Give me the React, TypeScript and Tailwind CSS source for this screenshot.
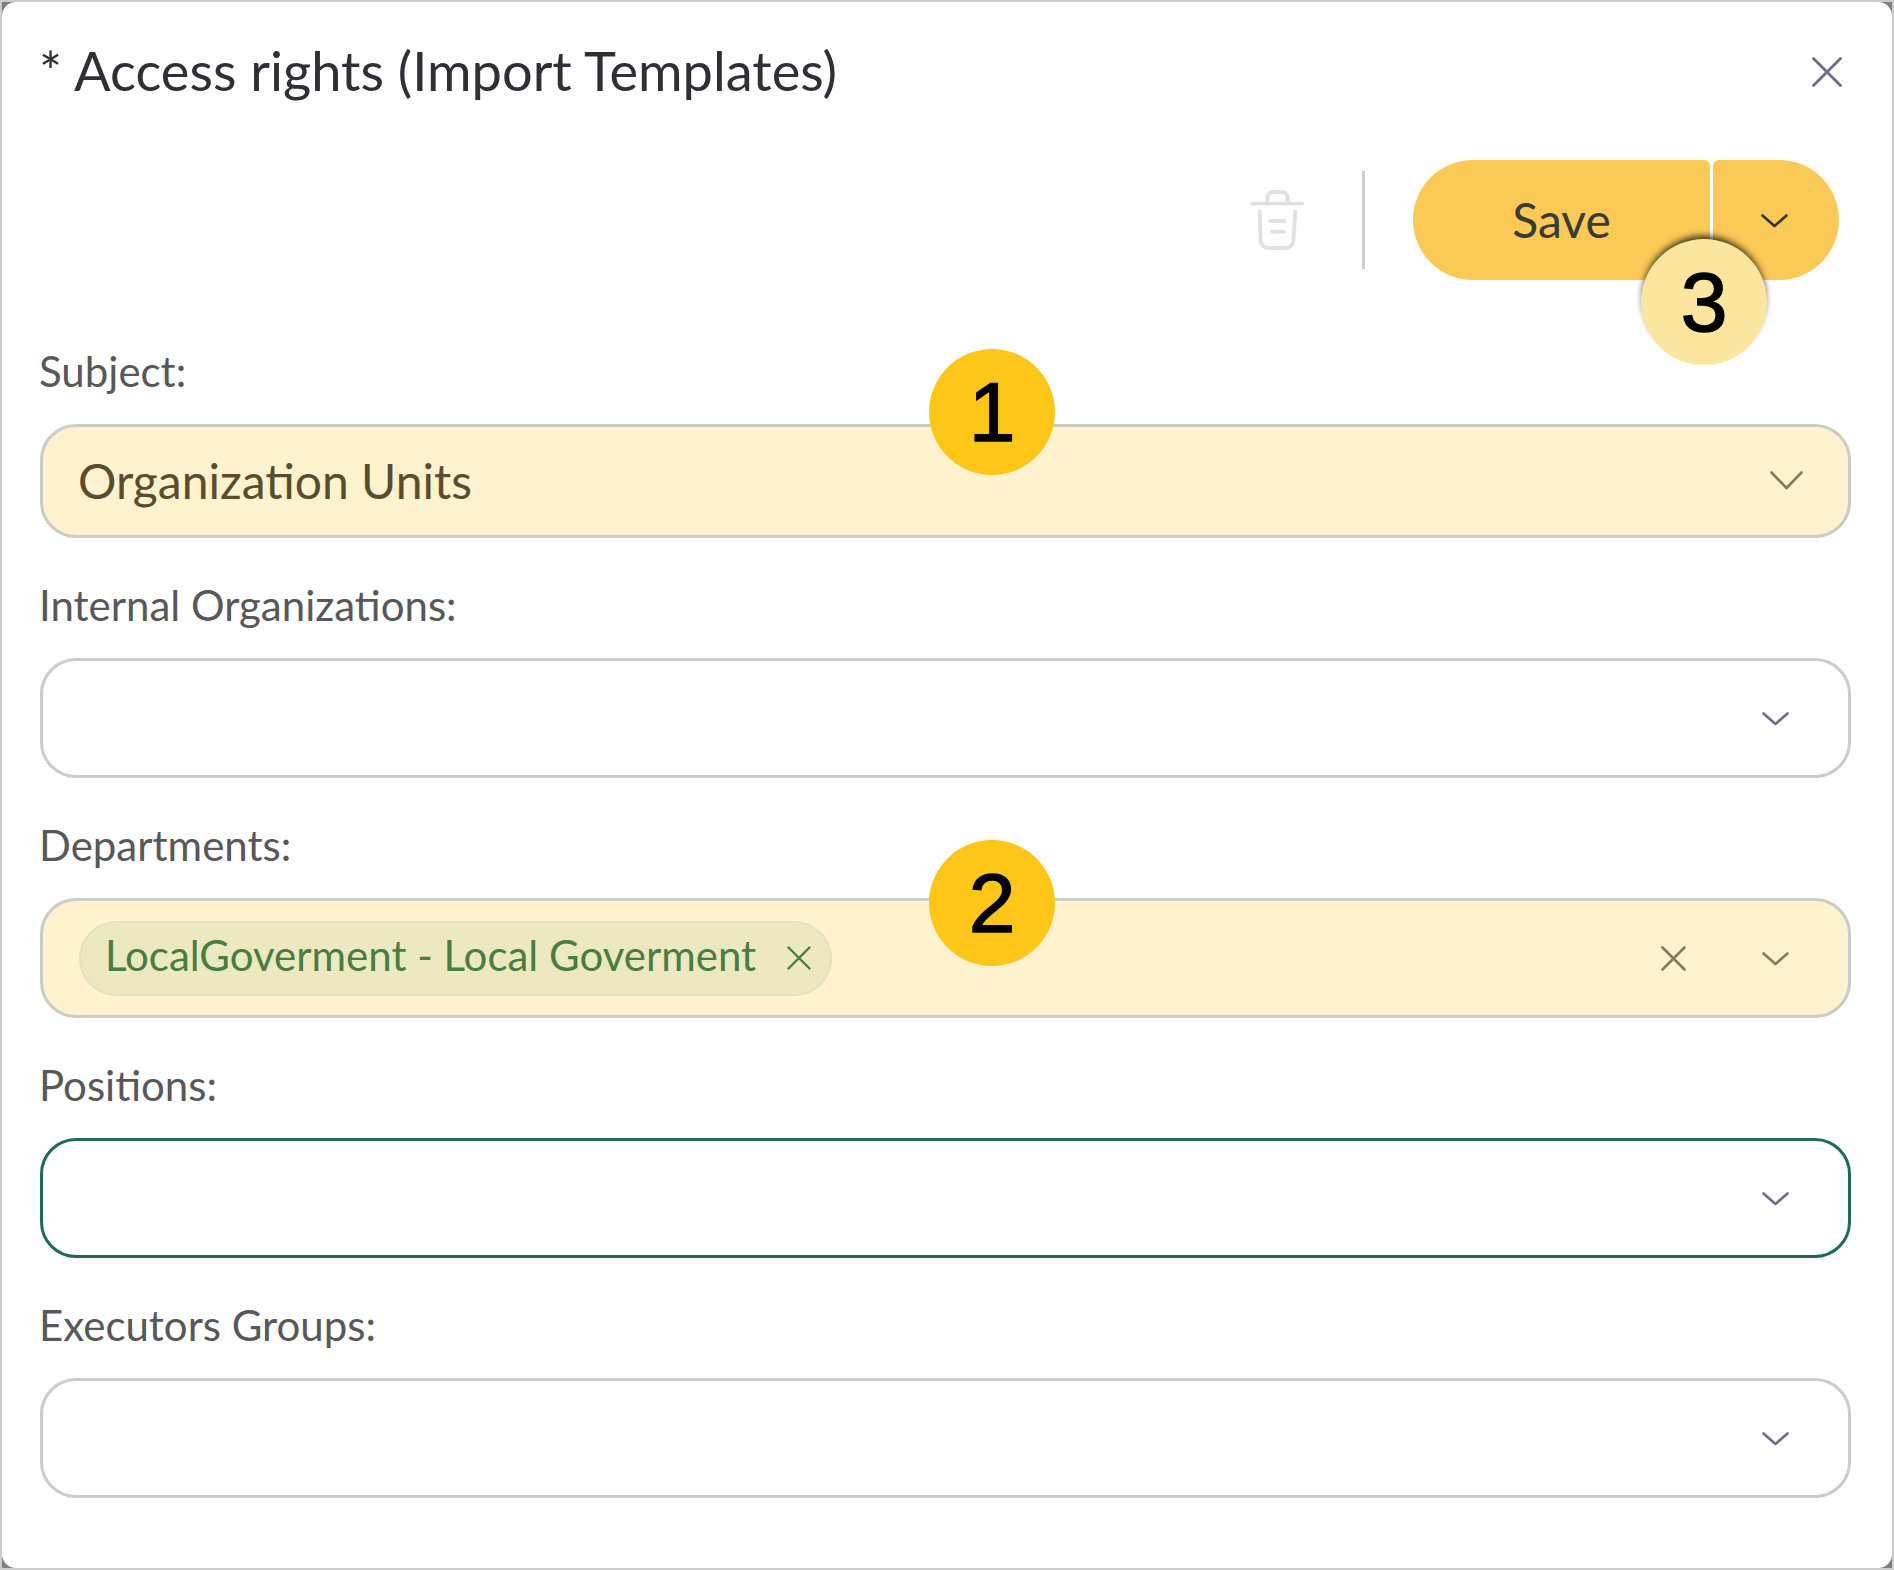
import React from "react";

function Chevron({ color, wide = false, className = "" }: { color: string; wide?: boolean; className?: string }) {
  return (
    <svg width={wide ? 33 : 27} height={wide ? 19 : 14} viewBox={wide ? "0 0 33 19" : "0 0 27 14"} fill="none" className={`shrink-0 ${className}`}>
      <path d={wide ? "M1.5 1.5 L16.5 17 L31.5 1.5" : "M1.5 1.5 L13.5 12 L25.5 1.5"} stroke={color} strokeWidth="2.6" strokeLinecap="round" strokeLinejoin="round" />
    </svg>
  );
}

function Cross({ size, color, width = 2.4 }: { size: number; color: string; width?: number }) {
  return (
    <svg width={size} height={size} viewBox={`0 0 ${size} ${size}`} fill="none" className="shrink-0">
      <path d={`M1.5 1.5 L${size - 1.5} ${size - 1.5} M${size - 1.5} 1.5 L1.5 ${size - 1.5}`} stroke={color} strokeWidth={width} strokeLinecap="round" />
    </svg>
  );
}

function Label({ children }: { children: React.ReactNode }) {
  return <div className="h-[48px] mb-[29px] -ml-[1px] text-[42px] leading-[48px] text-[#58585a]">{children}</div>;
}

function Badge({ n, className }: { n: string; className: string }) {
  return (
    <div className={`absolute w-[126px] h-[126px] rounded-full flex items-center justify-center text-[84px] leading-none text-black font-['Liberation_Sans',sans-serif] [-webkit-text-stroke:1.5px_black] ${className}`}>
      {n}
    </div>
  );
}

export default function App() {
  return (
    <div className="w-[1894px] h-[1570px] border-2 border-[#cccccc] bg-[#808080] font-['Lato',sans-serif]">
      <div className="relative h-full bg-white rounded-[14px] pl-[38px] pr-[41px]">
        <div className="h-[158px] pt-[39px] flex justify-between">
          <div className="-ml-[1px] text-[54.2px] leading-[60px] text-[#2f3036]">* Access rights (Import Templates)</div>
          <div className="pt-[16px] pr-[9px]">
            <Cross size={30} color="#6c6c86" width={2.8} />
          </div>
        </div>

        <div className="h-[120px] flex items-center justify-end pr-[12px]">
          <svg width="54" height="62" viewBox="0 0 56 62" fill="none" className="shrink-0">
            <g stroke="#dfe1e4" strokeWidth="4" strokeLinecap="round" strokeLinejoin="round">
              <path d="M2 14 L54 14" />
              <path d="M18 13 V8 a6 6 0 0 1 6 -6 h9 a6 6 0 0 1 6 6 V13" />
              <path d="M10 22 L11 52 a8 8 0 0 0 8 8 h18 a8 8 0 0 0 8 -8 L47 22" />
              <path d="M21 32 H36 M23 43 H35" />
            </g>
          </svg>
          <div className="w-[3px] h-[98px] bg-[#cfcfd1] ml-[58px] mr-[48px]" />
          <div className="w-[297px] h-[120px] flex items-center justify-center bg-[#fbc956] rounded-l-[60px] rounded-r-[6px] text-[48px] text-[#3a3a3a]">
            Save
          </div>
          <div className="w-[126px] h-[120px] ml-[3px] flex items-center justify-center bg-[#fbc956] rounded-r-[60px] rounded-l-[6px] pr-[3px]">
            <Chevron color="#333333" className="mt-[2px]" />
          </div>
        </div>

        <div className="mt-[67px] flex flex-col gap-[43px]">
          <div>
            <Label>Subject:</Label>
            <div className="h-[114px] border-[3px] border-[#cdcbc4] bg-[#fff2cf] rounded-[36px] flex items-center pl-[35px] pr-[45px]">
              <div className="flex-1 text-[48px] text-[#5a4c2c]">Organization Units</div>
              <Chevron color="#857a5c" wide className="-mt-[1px]" />
            </div>
          </div>
          <div>
            <Label>Internal Organizations:</Label>
            <div className="h-[120px] border-[3px] border-[#cccccc] bg-white rounded-[36px] flex items-center justify-end pr-[59px]">
              <Chevron color="#6c6c86" className="mt-[2px]" />
            </div>
          </div>
          <div>
            <Label>Departments:</Label>
            <div className="h-[120px] border-[3px] border-[#cdcbc8] bg-[#fff2cf] rounded-[36px] flex items-center pl-[36px] pr-[59px]">
              <div className="h-[75px] w-[753px] border-2 border-[#e5e1b9] bg-[#ece8c2] rounded-full flex items-center pl-[24px] pb-[5px] text-[42px] text-[#4a7d40]">
                LocalGoverment - Local Goverment
                <span className="absolute left-[785px] mt-[5px]">
                  <Cross size={24} color="#4a7d40" />
                </span>
              </div>
              <div className="flex-1 flex justify-end pr-[76px]">
                <Cross size={25} color="#857a5c" width={2.6} />
              </div>
              <Chevron color="#857a5c" className="mt-[2px]" />
            </div>
          </div>
          <div>
            <Label>Positions:</Label>
            <div className="h-[120px] border-[3px] border-[#1f6b56] bg-white rounded-[36px] flex items-center justify-end pr-[59px]">
              <Chevron color="#6c6c86" className="mt-[2px]" />
            </div>
          </div>
          <div>
            <Label>Executors Groups:</Label>
            <div className="h-[120px] border-[3px] border-[#cccccc] bg-white rounded-[36px] flex items-center justify-end pr-[59px]">
              <Chevron color="#6c6c86" className="mt-[2px]" />
            </div>
          </div>
        </div>

        <Badge n="1" className="left-[927px] top-[347px] bg-[#fec619]" />
        <Badge n="2" className="left-[927px] top-[838px] bg-[#fec619]" />
        <Badge n="3" className="left-[1639px] top-[237px] bg-[#fce59f] shadow-[0_-5px_7px_-2px_rgba(0,0,0,0.8)]" />
      </div>
    </div>
  );
}
